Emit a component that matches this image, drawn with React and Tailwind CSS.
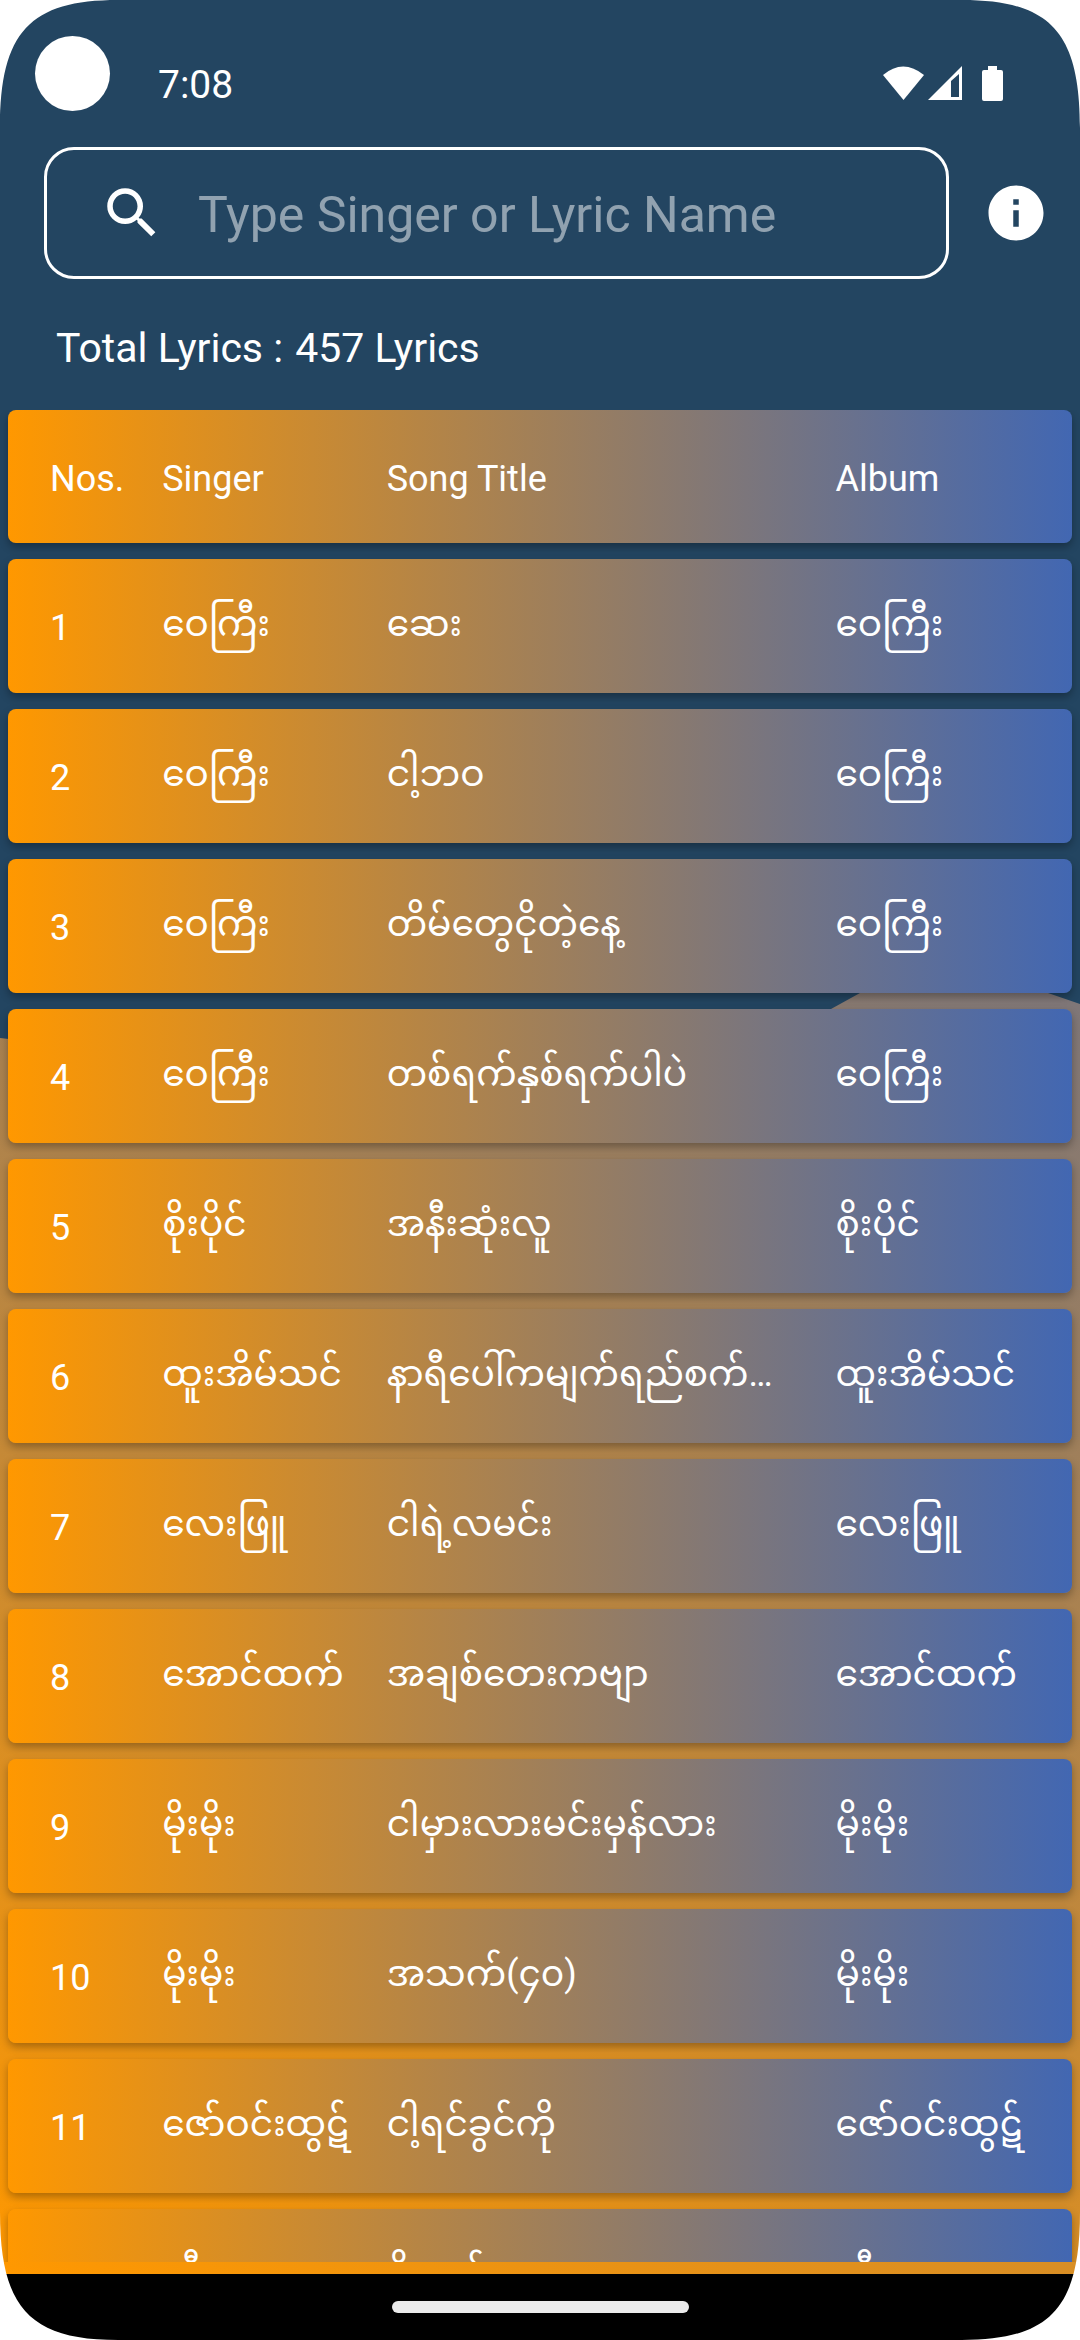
import React from "react";

const songs = [
  ["ဝေကြီး", "ဆေး"],
  ["ဝေကြီး", "ငါ့ဘဝ"],
  ["ဝေကြီး", "တိမ်တွေငိုတဲ့နေ့"],
  ["ဝေကြီး", "တစ်ရက်နှစ်ရက်ပါပဲ"],
  ["စိုးပိုင်", "အနီးဆုံးလူ"],
  ["ထူးအိမ်သင်", "နာရီပေါ်ကမျက်ရည်စက်များ"],
  ["လေးဖြူ", "ငါရဲ့လမင်း"],
  ["အောင်ထက်", "အချစ်တေးကဗျာ"],
  ["မိုးမိုး", "ငါမှားလားမင်းမှန်လား"],
  ["မိုးမိုး", "အသက်(၄၀)"],
  ["ဇော်ဝင်းထွဋ်", "ငါ့ရင်ခွင်ကို"],
  ["သီဟ", "မိုးစက်"],
];

function Backdrop() {
  return (
    <svg
      className="absolute inset-0 h-full w-full"
      viewBox="0 0 1080 2340"
      preserveAspectRatio="none"
      aria-hidden="true"
    >
      <defs>
        <linearGradient id="dusk" gradientUnits="userSpaceOnUse" x1="0" y1="2274" x2="1090" y2="136">
          <stop offset="0" stopColor="#ff9800" />
          <stop offset="1" stopColor="#4267b2" />
        </linearGradient>
      </defs>
      <path
        d="M0 1038 C120 1050 240 1100 400 1120 C600 1130 740 1060 831 1009 L860 993 C920 968 1000 974 1048 993 L1080 1004 V2340 H0 Z"
        fill="url(#dusk)"
      />
    </svg>
  );
}

function Corner({ className }) {
  return (
    <svg className={"absolute h-32 w-[118px] " + className} viewBox="0 0 118 128" fill="#fff" aria-hidden="true">
      <path d="M0 0 H118 C30 0 0 32 0 128 Z" />
    </svg>
  );
}

function StatusBar() {
  return (
    <div className="flex h-[147px] items-start justify-between pt-[61px] pr-[75px] pl-[158px]">
      <span className="text-[39px] leading-[48px]">7:08</span>
      <svg className="mt-1 h-9 w-[122px]" viewBox="0 0 122 36" fill="#fff" aria-hidden="true">
        <path d="M0 10 Q20 -7 41 10 L20.500 35 Z" />
        <path fillRule="evenodd" d="M45 35 L79 1 V35 Z M68 16 V32 H76 V9 Z" />
        <path d="M105 1 H114 V5 H118 Q120 5 120 7 V34 Q120 36 118 36 H101 Q99 36 99 34 V7 Q99 5 101 5 H105 Z" />
      </svg>
    </div>
  );
}

const rowClass =
  "grid shrink-0 grid-cols-[minmax(0,1fr)_minmax(0,2fr)_minmax(0,4fr)_minmax(0,2fr)] items-center rounded-lg bg-[linear-gradient(90deg,#ff9800,#4267b2)] pr-3 pl-[42px] text-left text-[36px] shadow-[0_4px_8px_rgba(0,0,0,0.3)]";

export default function App() {
  return (
    <div className="relative flex h-screen flex-col overflow-hidden bg-[#234561] font-[Roboto,'Noto_Sans_Myanmar','Noto_Sans',sans-serif] text-white">
      <Backdrop />
      <div className="relative flex min-h-0 flex-1 flex-col">
        <StatusBar />
        <header className="flex items-center pr-[31px] pl-11">
          <label className="flex h-[132px] min-w-0 flex-1 items-center rounded-[30px] border-3 border-white pl-[52px]">
            <svg className="h-[66px] w-[66px] shrink-0" viewBox="0 0 24 24" fill="#fff" aria-hidden="true">
              <path d="M15.5 14h-.79l-.28-.27A6.471 6.471 0 0 0 16 9.500 6.500 6.500 0 1 0 9.500 16c1.610 0 3.090-.59 4.230-1.570l.27.28v.79l5 4.990L20.490 19l-4.990-5zm-6 0C7.010 14 5 11.990 5 9.500S7.010 5 9.500 5 14 7.010 14 9.500 11.990 14 9.500 14z" />
            </svg>
            <span className="sr-only">Search lyrics</span>
            <input
              type="text"
              placeholder="Type Singer or Lyric Name"
              className="ml-[33px] min-w-0 flex-1 bg-transparent pt-1 text-[50px] leading-[60px] outline-none placeholder:text-white/50 placeholder:opacity-100"
            />
          </label>
          <button type="button" aria-label="About" className="ml-[34px]">
            <svg className="block h-[66px] w-[66px]" viewBox="0 0 24 24" fill="#fff" aria-hidden="true">
              <path d="M12 2C6.480 2 2 6.480 2 12s4.480 10 10 10 10-4.480 10-10S17.520 2 12 2zm1 15h-2v-6h2v6zm0-8h-2V7h2v2z" />
            </svg>
          </button>
        </header>
        <p className="flex h-[131px] items-center gap-3 pt-1.5 pl-14 text-[41px] leading-[50px]">
          <span>Total Lyrics :</span>
          <span>457 Lyrics</span>
        </p>
        <table className="flex min-h-0 flex-1 flex-col gap-4 overflow-hidden px-2">
          <thead className="contents">
            <tr className={rowClass + " h-[133px]"}>
              <th className="pt-1 font-normal">Nos.</th>
              <th className="pt-1 font-normal">Singer</th>
              <th className="pt-1 font-normal">Song Title</th>
              <th className="pt-1 font-normal">Album</th>
            </tr>
          </thead>
          <tbody className="contents">
            {songs.map(([singer, title], i) => (
              <tr key={i} className={rowClass + " h-[134px]"}>
                <td className="pt-1">{i + 1}</td>
                <td className="truncate pb-1 leading-[80px]">{singer}</td>
                <td className="truncate pr-14 pb-1 leading-[80px]">{title}</td>
                <td className="truncate pb-1 leading-[80px]">{singer}</td>
              </tr>
            ))}
          </tbody>
        </table>
      </div>
      <footer className="relative mt-3 flex h-[66px] shrink-0 items-center justify-center bg-black">
        <span className="h-3 w-[297px] rounded-full bg-[#ebebeb]" />
      </footer>
      <span className="absolute top-9 left-[35px] size-[75px] rounded-full bg-white" />
      <Corner className="top-0 left-0" />
      <Corner className="top-0 right-0 -scale-x-100" />
      <Corner className="bottom-0 left-0 -scale-y-100" />
      <Corner className="right-0 bottom-0 -scale-100" />
    </div>
  );
}
